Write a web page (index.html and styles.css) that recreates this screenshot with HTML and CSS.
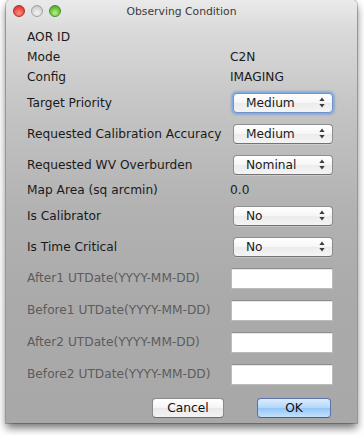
FILE: index.html
```html
<html>
   <head>
      <title>Observing Condition</title>
      <link rel="stylesheet" href="styles.css">
   </head>
   <body>
      <div class="window">
         <div class="titlebar">
            <div class="lights">
               <span class="light close"></span>
               <span class="light min"></span>
               <span class="light zoom"></span>
            </div>
            <div class="title">Observing Condition</div>
         </div>
         <div class="content">
            <div class="row text"><span class="label">AOR ID</span></div>
            <div class="row text"><span class="label">Mode</span><span class="value">C2N</span></div>
            <div class="row text"><span class="label">Config</span><span class="value">IMAGING</span></div>
            <div class="row popup">
               <span class="label">Target Priority</span>
               <div class="select focused"><span>Medium</span><svg class="arrows" width="6" height="11" viewBox="0 0 6 11"><polygon points="0.4,4 3,0.6 5.6,4"/><polygon points="0.4,7 3,10.4 5.6,7"/></svg></div>
            </div>
            <div class="row popup">
               <span class="label">Requested Calibration Accuracy</span>
               <div class="select"><span>Medium</span><svg class="arrows" width="6" height="11" viewBox="0 0 6 11"><polygon points="0.4,4 3,0.6 5.6,4"/><polygon points="0.4,7 3,10.4 5.6,7"/></svg></div>
            </div>
            <div class="row popup">
               <span class="label">Requested WV Overburden</span>
               <div class="select"><span>Nominal</span><svg class="arrows" width="6" height="11" viewBox="0 0 6 11"><polygon points="0.4,4 3,0.6 5.6,4"/><polygon points="0.4,7 3,10.4 5.6,7"/></svg></div>
            </div>
            <div class="row text"><span class="label">Map Area (sq arcmin)</span><span class="value">0.0</span></div>
            <div class="row popup">
               <span class="label">Is Calibrator</span>
               <div class="select"><span>No</span><svg class="arrows" width="6" height="11" viewBox="0 0 6 11"><polygon points="0.4,4 3,0.6 5.6,4"/><polygon points="0.4,7 3,10.4 5.6,7"/></svg></div>
            </div>
            <div class="row popup">
               <span class="label">Is Time Critical</span>
               <div class="select"><span>No</span><svg class="arrows" width="6" height="11" viewBox="0 0 6 11"><polygon points="0.4,4 3,0.6 5.6,4"/><polygon points="0.4,7 3,10.4 5.6,7"/></svg></div>
            </div>
            <div class="row field"><span class="label disabled">After1 UTDate(YYYY-MM-DD)</span><div class="input"></div></div>
            <div class="row field"><span class="label disabled">Before1 UTDate(YYYY-MM-DD)</span><div class="input"></div></div>
            <div class="row field"><span class="label disabled">After2 UTDate(YYYY-MM-DD)</span><div class="input"></div></div>
            <div class="row field"><span class="label disabled">Before2 UTDate(YYYY-MM-DD)</span><div class="input"></div></div>
            <div class="buttons">
               <button class="btn">Cancel</button>
               <button class="btn default">OK</button>
            </div>
         </div>
      </div>
   </body>
</html>
```

FILE: styles.css
```css
body {
   margin: 0;
   background: #fff;
   font-family: "DejaVu Sans", sans-serif;
   font-size: 12.2px;
   color: #1a1a1a;
}
.window {
   width: 351px;
   margin-left: 6px;
   border-radius: 5px 5px 0 0;
   background: linear-gradient(#eaeaea 0px, #dadada 30px, #c4c4c4 110px, #b2b2b2 210px, #aaaaaa 300px, #a8a8a8 100%);
   box-shadow: 0 0 0 1px rgba(0, 0, 0, 0.22), 0 5px 8px rgba(0, 0, 0, 0.55);
}
.titlebar {
   height: 22px;
   display: grid;
   grid-template-columns: 1fr auto 1fr;
   align-items: center;
}
.lights {
   display: flex;
   gap: 6px;
   padding-left: 7px;
}
.light {
   width: 12px;
   height: 12px;
   border-radius: 50%;
   box-sizing: border-box;
}
.light.close {
   background: radial-gradient(circle at 50% 70%, #ff8f86 0, #ec4d45 55%, #c22a22 100%);
   border: 1px solid #b0302a;
}
.light.min {
   background: radial-gradient(circle at 50% 70%, #f4f4f4 0, #d8d8d8 55%, #b8b8b8 100%);
   border: 1px solid #a3a3a3;
}
.light.zoom {
   background: radial-gradient(circle at 50% 70%, #b9f08b 0, #6fc43e 55%, #3f9621 100%);
   border: 1px solid #468e2c;
}
.title {
   font-size: 10.8px;
   color: #3a3a3a;
}
.content {
   padding: 5px 24px 5px 21px;
}
.row {
   display: flex;
   align-items: center;
}
.row.text {
   height: 20px;
}
.row.popup {
   height: 31px;
}
.row.field {
   height: 32px;
}
.label {
   width: 203px;
}
.label.disabled {
   color: #5c5c5c;
}
.select {
   margin-left: 3px;
   width: 100px;
   height: 20px;
   box-sizing: border-box;
   display: flex;
   align-items: center;
   justify-content: space-between;
   padding: 0 7px 0 12px;
   border: 1px solid #8e8e8e;
   border-bottom-color: #737373;
   border-radius: 4px;
   background: linear-gradient(#ffffff, #f6f6f6 50%, #ececec 51%, #f4f4f4);
   box-shadow: 0 1px 0 rgba(255, 255, 255, 0.25);
}
.select.focused {
   border-color: #6d93cf;
   box-shadow: 0 0 0 1px #86addf, 0 0 2px 2px rgba(98, 148, 222, 0.55);
}
.arrows {
   fill: #3c3c3c;
}
.input {
   margin-left: 2px;
   width: 102px;
   height: 21px;
   box-sizing: border-box;
   background: #fff;
   border: 1px solid #bcbcbc;
   border-top-color: #8f8f8f;
   box-shadow: inset 0 1px 0 #e6e6e6;
}
.buttons {
   display: flex;
   justify-content: flex-end;
   gap: 33px;
   margin-top: 8px;
   padding-right: 2px;
}
.btn {
   width: 72px;
   height: 20px;
   padding: 0;
   font: inherit;
   color: #111;
   border: 1px solid #8a8a8a;
   border-bottom-color: #6e6e6e;
   border-radius: 4px;
   background: linear-gradient(#ffffff, #f5f5f5 50%, #e9e9e9 51%, #f3f3f3);
}
.btn.default {
   width: 74px;
   border-color: #5d73a8;
   border-bottom-color: #4a5d8e;
   background: linear-gradient(#dcedfd, #b3d7fa 50%, #94c6f6 51%, #c2e2fd);
}
```
